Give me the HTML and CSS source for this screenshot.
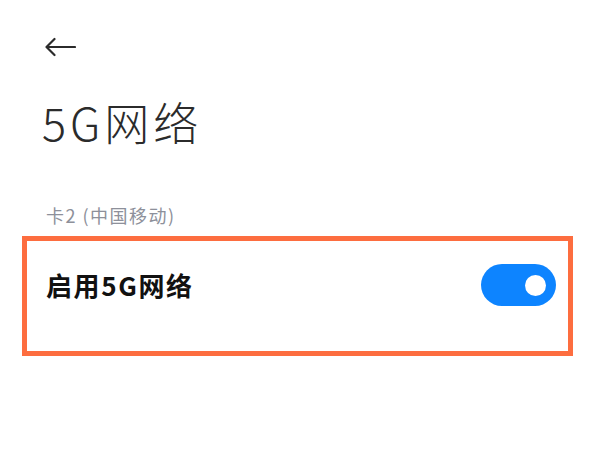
FILE: index.html
```html
<!DOCTYPE html>
<html>
<head>
<meta charset="utf-8">
<link rel="stylesheet" href="styles.css">
</head>
<body>
<div class="page">
  <div class="topbar">
    <svg class="back" width="32" height="20" viewBox="0 0 32 20">
      <path d="M31 10 H2.5 M10.5 2 L2.5 10 L10.5 18" fill="none" stroke="#2b2b2b" stroke-width="2.2" stroke-linecap="round" stroke-linejoin="round"/>
    </svg>
  </div>
  <h1 class="title">5G网络</h1>
  <div class="label">卡2 (中国移动)</div>
  <div class="card">
    <div class="row">
      <span class="row-text">启用5G网络</span>
      <span class="toggle"><span class="knob"></span></span>
    </div>
  </div>
</div>
</body>
</html>
```
FILE: styles.css
```css
html, body {
  margin: 0;
  padding: 0;
  background: #ffffff;
}
.page {
  width: 600px;
  height: 450px;
  overflow: hidden;
  font-family: "Noto Sans CJK SC", "Noto Sans", sans-serif;
}
.topbar {
  padding: 37px 0 0 44px;
  height: 20px;
}
.back {
  display: block;
}
.title {
  margin: 35px 0 0 42px;
  font-size: 45px;
  font-weight: 300;
  letter-spacing: 4px;
  line-height: 60px;
  color: #2b2b2b;
  height: 60px;
}
.label {
  margin: 51px 0 0 46px;
  font-size: 18px;
  letter-spacing: 1.5px;
  line-height: 24px;
  color: #8d909a;
}
.card {
  margin: 9px 0 0 22px;
  width: 541px;
  height: 110px;
  border: 5px solid #fd6d3f;
  box-sizing: content-box;
}
.row {
  display: flex;
  align-items: center;
  justify-content: space-between;
  padding: 23px 12px 0 19px;
  height: 42px;
}
.row-text {
  font-size: 26px;
  font-weight: 700;
  letter-spacing: 1.6px;
  color: #111111;
  line-height: 42px;
}
.toggle {
  width: 75px;
  height: 42px;
  border-radius: 21px;
  background: #0d84ff;
  display: flex;
  align-items: center;
  justify-content: flex-end;
  padding-right: 10px;
  box-sizing: border-box;
}
.knob {
  width: 21px;
  height: 21px;
  border-radius: 50%;
  background: #ffffff;
}
```
